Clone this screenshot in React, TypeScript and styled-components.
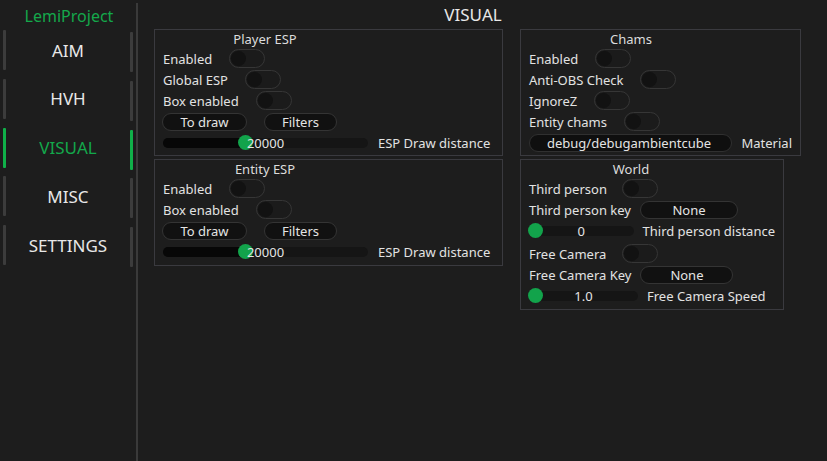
import React from "react";
import styled, { createGlobalStyle } from "styled-components";

const Global = createGlobalStyle`
  html, body { margin: 0; padding: 0; background: #1d1d1d; }
  body { font-family: "Noto Sans", "Open Sans", sans-serif; color: #e4e4e4; }
  * { box-sizing: border-box; }
`;

const Page = styled.div`
  width: 827px;
  height: 461px;
  display: flex;
  background: #1d1d1d;
  overflow: hidden;
`;

const Sidebar = styled.nav`
  width: 136px;
  display: flex;
  flex-direction: column;
`;

const Brand = styled.div`
  height: 30px;
  padding-top: 1px;
  display: flex;
  align-items: center;
  justify-content: center;
  color: #14a84b;
  font-size: 16px;
  padding-left: 2px;
`;

const NavList = styled.div`
  display: flex;
  flex-direction: column;
  gap: 6.75px;
  padding-left: 3px;
  width: 133px;
`;

const NavItem = styled.div`
  height: 42px;
  display: flex;
  align-items: stretch;
`;

const NavBar = styled.span<{ $active?: boolean; $end?: boolean }>`
  width: 3px;
  height: 40px;
  border-radius: 1px;
  background: ${(p) => (p.$active ? "#10b049" : "#3c3c3c")};
  align-self: ${(p) => (p.$end ? "flex-end" : "flex-start")};
`;

const NavLabel = styled.span<{ $active?: boolean }>`
  flex: 1;
  display: flex;
  align-items: center;
  justify-content: center;
  font-size: 17px;
  padding-bottom: 2px;
  color: ${(p) => (p.$active ? "#13a84b" : "#e8e8e8")};
`;

const Divider = styled.div`
  width: 2px;
  margin-top: 3px;
  background: #3a3a3a;
`;

const Main = styled.main`
  flex: 1;
  display: flex;
  flex-direction: column;
`;

const PageTitle = styled.div`
  height: 29px;
  padding-right: 19px;
  display: flex;
  align-items: center;
  justify-content: center;
  font-size: 17px;
  color: #e8e8e8;
`;

const Columns = styled.div`
  display: flex;
  gap: 17px;
  padding-left: 16px;
  align-items: flex-start;
`;

const Column = styled.div`
  display: flex;
  flex-direction: column;
  gap: 3px;
`;

const Panel = styled.section<{ $w: number; $h: number }>`
  width: ${(p) => p.$w}px;
  height: ${(p) => p.$h}px;
  border: 1px solid #3a3a3f;
  padding: 0 8px;
  display: flex;
  flex-direction: column;
`;

const PanelTitle = styled.div`
  width: 204px;
  height: 18px;
  padding-bottom: 1px;
  display: flex;
  align-items: center;
  justify-content: center;
  font-size: 13px;
  color: #dcdcdc;
`;

const Row = styled.div<{ $gapTop?: number }>`
  height: 21px;
  display: flex;
  align-items: center;
  font-size: 13px;
  margin-top: ${(p) => p.$gapTop ?? 0}px;
  white-space: nowrap;
`;

const Label = styled.span`
  color: #e2e2e2;
`;

const Toggle = styled.span<{ $ml?: number }>`
  margin-left: ${(p) => p.$ml ?? 17}px;
  width: 36px;
  height: 19px;
  border-radius: 10px;
  border: 1px solid #363636;
  background: #1b1b1b;
  display: flex;
  align-items: center;
  padding-left: 1px;
  &::before {
    content: "";
    width: 15px;
    height: 15px;
    border-radius: 50%;
    background: #121212;
  }
`;

const PillButton = styled.span<{ $w: number; $ml?: number }>`
  width: ${(p) => p.$w}px;
  margin-left: ${(p) => p.$ml ?? 0}px;
  height: 18px;
  border-radius: 9px;
  border: 1px solid #343434;
  background: #111111;
  display: flex;
  align-items: center;
  justify-content: center;
  color: #e4e4e4;
  font-size: 13px;
`;

const Track = styled.span<{ $w: number }>`
  position: relative;
  width: ${(p) => p.$w}px;
  height: 10px;
  border-radius: 5px;
  background: #151515;
  display: flex;
  align-items: center;
  justify-content: center;
  overflow: visible;
`;

const TrackFill = styled.span`
  position: absolute;
  left: 0;
  top: 0;
  bottom: 0;
  border-radius: 5px 0 0 5px;
  background: #070707;
`;

const Knob = styled.span`
  position: absolute;
  top: 50%;
  width: 15px;
  height: 15px;
  margin-top: -7.5px;
  margin-left: -7.5px;
  border-radius: 50%;
  background: #12a34b;
`;

const TrackValue = styled.span`
  position: relative;
  font-size: 13px;
  color: #e4e4e4;
  line-height: 10px;
`;

const SideLabel = styled.span<{ $ml?: number }>`
  margin-left: ${(p) => p.$ml ?? 10}px;
  color: #e2e2e2;
`;

const TextInput = styled.span<{ $w: number }>`
  width: ${(p) => p.$w}px;
  height: 18px;
  border-radius: 9px;
  border: 1px solid #303030;
  background: #0f0f0f;
  display: flex;
  align-items: center;
  padding-left: 17px;
  color: #e4e4e4;
  font-size: 13px;
`;

type SliderProps = { w: number; value: string; pos: number; label: string; ml?: number };
const SliderRow: React.FC<SliderProps & { gapTop?: number }> = ({ w, value, pos, label, ml, gapTop }) => (
  <Row $gapTop={gapTop}>
    <Track $w={w}>
      <TrackFill style={{ width: pos }} />
      <Knob style={{ left: pos }} />
      <TrackValue>{value}</TrackValue>
    </Track>
    <SideLabel $ml={ml}>{label}</SideLabel>
  </Row>
);

const ToggleRow: React.FC<{ label: string; ml?: number; gapTop?: number }> = ({ label, ml, gapTop }) => (
  <Row $gapTop={gapTop}>
    <Label>{label}</Label>
    <Toggle $ml={ml} />
  </Row>
);

const navItems = ["AIM", "HVH", "VISUAL", "MISC", "SETTINGS"];

export default function App() {
  return (
    <>
      <Global />
      <Page>
        <Sidebar>
          <Brand>LemiProject</Brand>
          <NavList>
            {navItems.map((n) => {
              const active = n === "VISUAL";
              return (
                <NavItem key={n}>
                  <NavBar $active={active} />
                  <NavLabel $active={active}>{n}</NavLabel>
                  <NavBar $active={active} $end />
                </NavItem>
              );
            })}
          </NavList>
        </Sidebar>
        <Divider />
        <Main>
          <PageTitle>VISUAL</PageTitle>
          <Columns>
            <Column>
              <Panel $w={349} $h={127}>
                <PanelTitle>Player ESP</PanelTitle>
                <ToggleRow label="Enabled" />
                <ToggleRow label="Global ESP" />
                <ToggleRow label="Box enabled" />
                <Row>
                  <PillButton $w={85} $ml={-1}>To draw</PillButton>
                  <PillButton $w={73} $ml={17}>Filters</PillButton>
                </Row>
                <SliderRow w={205} value="20000" pos={82} label="ESP Draw distance" />
              </Panel>
              <Panel $w={349} $h={107}>
                <PanelTitle>Entity ESP</PanelTitle>
                <ToggleRow label="Enabled" />
                <ToggleRow label="Box enabled" />
                <Row>
                  <PillButton $w={85} $ml={-1}>To draw</PillButton>
                  <PillButton $w={73} $ml={17}>Filters</PillButton>
                </Row>
                <SliderRow w={205} value="20000" pos={82} label="ESP Draw distance" />
              </Panel>
            </Column>
            <Column>
              <Panel $w={281} $h={127}>
                <PanelTitle>Chams</PanelTitle>
                <ToggleRow label="Enabled" />
                <ToggleRow label="Anti-OBS Check" />
                <ToggleRow label="IgnoreZ" />
                <ToggleRow label="Entity chams" />
                <Row>
                  <TextInput $w={205}>debug/debugambientcube</TextInput>
                  <SideLabel $ml={10}>Material</SideLabel>
                </Row>
              </Panel>
              <Panel $w={264} $h={151}>
                <PanelTitle>World</PanelTitle>
                <ToggleRow label="Third person" ml={15} />
                <Row>
                  <Label>Third person key</Label>
                  <PillButton $w={98} $ml={9}>None</PillButton>
                </Row>
                <SliderRow w={109} value="0" pos={6} label="Third person distance" ml={9} />
                <ToggleRow label="Free Camera" ml={16} gapTop={2} />
                <Row>
                  <Label>Free Camera Key</Label>
                  <PillButton $w={93} $ml={9}>None</PillButton>
                </Row>
                <SliderRow w={109} value="1.0" pos={6} label="Free Camera Speed" ml={9} />
              </Panel>
            </Column>
          </Columns>
        </Main>
      </Page>
    </>
  );
}
